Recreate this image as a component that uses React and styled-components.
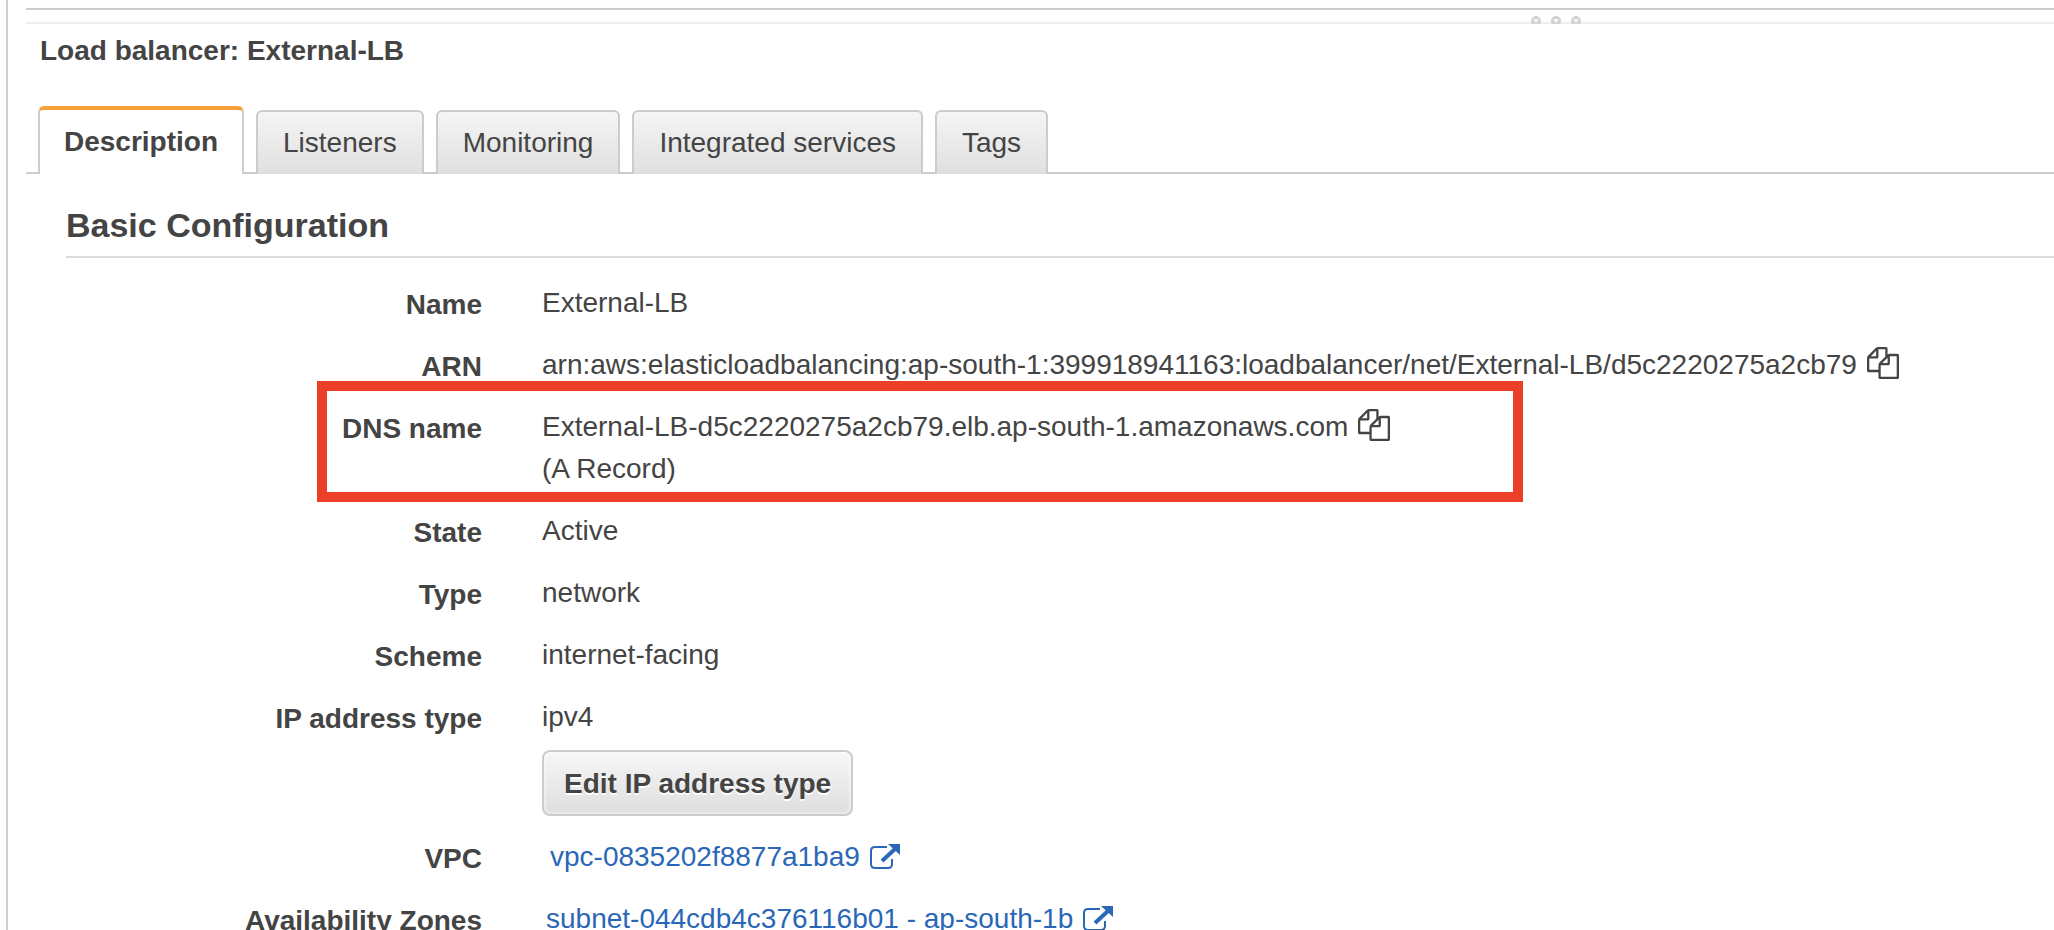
import React from "react";
import styled, { createGlobalStyle, css } from "styled-components";

const GlobalStyle = createGlobalStyle`
  *, *::before, *::after { box-sizing: border-box; }
  body {
    margin: 0;
    background: #fff;
    color: #444;
    font: 28px/42px "Liberation Sans", Arial, sans-serif;
  }
`;

const Page = styled.main`
  height: 100vh;
  overflow: hidden;
  padding-left: 6px;
`;

const Panel = styled.section`
  min-height: 100%;
  border-left: 2px solid #ccd1d6;
  padding: 8px 0 0 18px;
`;

const Splitter = styled.div`
  display: flex;
  justify-content: flex-end;
  align-items: flex-end;
  gap: 10px;
  height: 16px;
  padding-right: 23.3%;
  border-top: 2px solid #ccc;
  box-shadow: inset 0 -2px #eee;
`;

const Title = styled.h1`
  margin: 0;
  padding: 6px 14px 34px;
  font-size: 28px;
  line-height: 42px;
`;

const TabList = styled.div`
  display: flex;
  align-items: flex-end;
  gap: 12px;
  padding-left: 12px;
  box-shadow: inset 0 -2px #ccc;
`;

const Tab = styled.button`
  height: 64px;
  padding: 0 25px;
  border: 2px solid #ccc;
  border-bottom: 0;
  border-radius: 6px 6px 0 0;
  background: linear-gradient(#f5f5f5, #dfdfdf);
  color: #444;
  font: inherit;
  white-space: nowrap;
  ${({ $active }) =>
    $active &&
    css`
      height: 68px;
      padding: 0 24px;
      border-top: 4px solid #f79f39;
      background: #fff;
      font-weight: bold;
    `}
`;

const Content = styled.div`
  padding: 30px 0 0 40px;
`;

const SectionTitle = styled.h2`
  margin: 0 0 24px;
  padding-bottom: 10px;
  border-bottom: 2px solid #ddd;
  font-size: 34px;
  line-height: 42px;
`;

const Details = styled.dl`
  display: flex;
  flex-direction: column;
  gap: 20px;
  margin: 0;
`;

const Row = styled.div`
  position: relative;
  display: grid;
  grid-template-columns: 416px 1fr;
  column-gap: 60px;
`;

const Label = styled.dt`
  padding-top: 2px;
  height: 42px;
  font-weight: bold;
  text-align: right;
`;

const Value = styled.dd`
  margin: 0;
`;

const Line = styled.div`
  display: flex;
  align-items: center;
  gap: 10px;
  height: 42px;
  padding-left: ${({ $indent = 0 }) => $indent}px;
  white-space: nowrap;
`;

const Highlight = styled.div`
  position: absolute;
  top: -25px;
  left: 251px;
  width: 1206px;
  height: 121px;
  border: 10px solid #ec3f27;
  pointer-events: none;
`;

const CopyButton = styled.button`
  display: flex;
  padding: 0 0 4px;
  border: 0;
  background: none;
  color: #444;
`;

const Link = styled.a`
  display: flex;
  align-items: center;
  gap: 10px;
  color: #2a67b7;
  text-decoration: none;
`;

const EditButton = styled.button`
  display: block;
  height: 66px;
  margin-top: 12px;
  padding: 2px 20px 0;
  border: 2px solid #ccc;
  border-radius: 8px;
  background: linear-gradient(#f7f7f7, #dedede);
  box-shadow: inset 0 0 4px #fff;
  color: #444;
  font: inherit;
  font-weight: bold;
  text-shadow: 0 2px #fff;
`;

const Grip = () => (
  <svg width="10" height="8" viewBox="0 0 10 8" aria-hidden="true">
    <circle cx="5" cy="5" r="5" fill="#d2d2d2" />
    <path d="M2 3H8L5 7Z" fill="#f7f7f7" />
  </svg>
);

const Copy = ({ label }) => (
  <CopyButton type="button" aria-label={label}>
    <svg width="32" height="32" viewBox="0 0 1792 1792" fill="currentColor">
      <path d="M1696 384q40 0 68 28t28 68v1216q0 40-28 68t-68 28h-960q-40 0-68-28t-28-68v-288h-544q-40 0-68-28t-28-68v-672q0-40 20-88t48-76l408-408q28-28 76-48t88-20h416q40 0 68 28t28 68v328q68-40 128-40h416zm-544 213l-299 299h299v-299zm-640-384l-299 299h299v-299zm196 647l316-316v-416h-384v416q0 40-28 68t-68 28h-416v640h512v-256q0-40 20-88t48-76zm956 804v-1152h-384v416q0 40-28 68t-68 28h-416v640h896z" />
    </svg>
  </CopyButton>
);

const External = () => (
  <svg width="30" height="26" viewBox="0 0 30 26" fill="none" aria-hidden="true">
    <path d="M17 3H5Q1 3 1 7V20Q1 24 5 24H18Q22 24 22 20V15" stroke="currentColor" strokeWidth="2" />
    <path d="M12 17L25 5" stroke="currentColor" strokeWidth="4" />
    <path d="M18 0H30V11Z" fill="currentColor" />
  </svg>
);

const tabs = ["Description", "Listeners", "Monitoring", "Integrated services", "Tags"];

const Field = ({ label, children, highlighted }) => (
  <Row>
    <Label>{label}</Label>
    <Value>{children}</Value>
    {highlighted && <Highlight />}
  </Row>
);

export default function App() {
  return (
    <Page>
      <GlobalStyle />
      <Panel>
        <Splitter>
          <Grip />
          <Grip />
          <Grip />
        </Splitter>
        <Title>Load balancer: External-LB</Title>
        <TabList role="tablist">
          {tabs.map((tab, i) => (
            <Tab key={tab} type="button" role="tab" aria-selected={i === 0} $active={i === 0}>
              {tab}
            </Tab>
          ))}
        </TabList>
        <Content>
          <SectionTitle>Basic Configuration</SectionTitle>
          <Details>
            <Field label="Name">
              <Line>External-LB</Line>
            </Field>
            <Field label="ARN">
              <Line>
                arn:aws:elasticloadbalancing:ap-south-1:399918941163:loadbalancer/net/External-LB/d5c2220275a2cb79
                <Copy label="Copy ARN" />
              </Line>
            </Field>
            <Field label="DNS name" highlighted>
              <Line>
                External-LB-d5c2220275a2cb79.elb.ap-south-1.amazonaws.com
                <Copy label="Copy DNS name" />
              </Line>
              <Line>(A Record)</Line>
            </Field>
            <Field label="State">
              <Line>Active</Line>
            </Field>
            <Field label="Type">
              <Line>network</Line>
            </Field>
            <Field label="Scheme">
              <Line>internet-facing</Line>
            </Field>
            <Field label="IP address type">
              <Line>ipv4</Line>
              <EditButton type="button">Edit IP address type</EditButton>
            </Field>
            <Field label="VPC">
              <Line $indent={8}>
                <Link href="#vpc">
                  vpc-0835202f8877a1ba9
                  <External />
                </Link>
              </Line>
            </Field>
            <Field label="Availability Zones">
              <Line $indent={4}>
                <Link href="#subnet">
                  subnet-044cdb4c376116b01 - ap-south-1b
                  <External />
                </Link>
              </Line>
            </Field>
          </Details>
        </Content>
      </Panel>
    </Page>
  );
}
